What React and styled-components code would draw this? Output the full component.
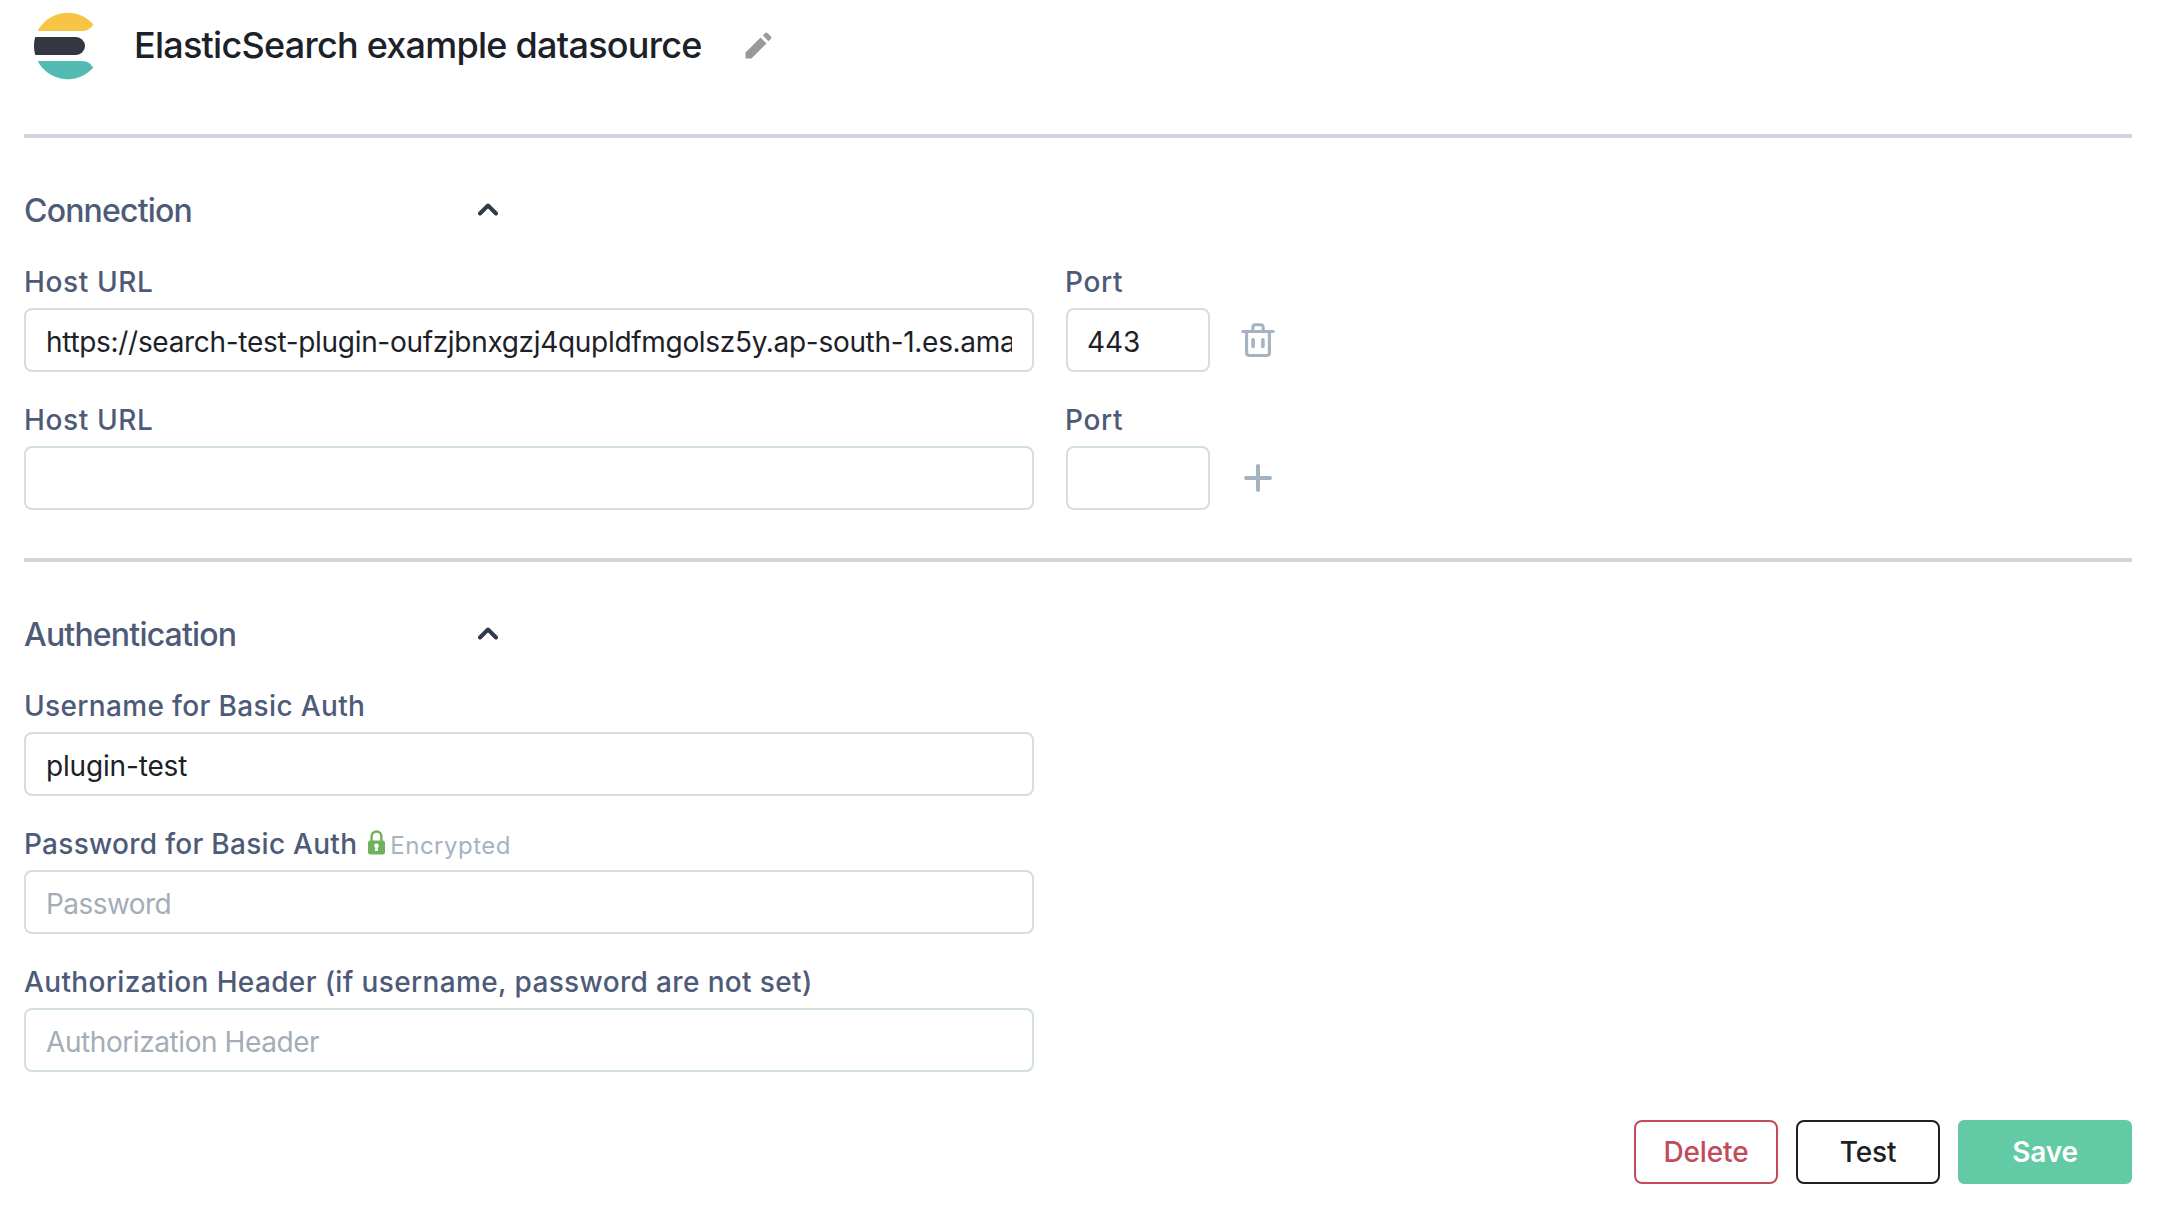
import React from "react";
import styled, { createGlobalStyle } from "styled-components";

const GlobalStyle = createGlobalStyle`
  *, *::before, *::after { box-sizing: border-box; }
  body {
    margin: 0;
    background: #ffffff;
    font-family: Inter, "Liberation Sans", sans-serif;
    overflow: hidden;
  }
`;

const Page = styled.main`
  display: flex;
  flex-direction: column;
  width: 2164px;
  height: 1214px;
  padding: 12px 32px 30px 24px;
`;

const Header = styled.header`
  display: flex;
  align-items: center;
  height: 68px;
  margin-bottom: 54px;
  padding-left: 10px;
`;

const Title = styled.h1`
  margin: 0 43.5px 0 40px;
  padding-bottom: 2px;
  font-size: 36px;
  font-weight: 500;
  line-height: 44px;
  letter-spacing: -0.75px;
  white-space: nowrap;
  color: #1c2128;
`;

const IconButton = styled.button`
  display: flex;
  flex: none;
  padding: 0 0 ${(p) => p.$lift || 0}px;
  border: 0;
  background: none;
  color: ${(p) => p.$color};
  svg { display: block; }
`;

const Section = styled.section`
  display: flex;
  flex-direction: column;
  padding: 52px 0 48px;
  border-top: 4px solid #d0d5dc;
`;

const SectionHeader = styled.div`
  display: flex;
  align-items: center;
  justify-content: space-between;
  width: 474px;
  height: 40px;
  margin-bottom: 35px;
`;

const SectionTitle = styled.h2`
  margin: 0;
  padding-top: 2px;
  font-size: 32px;
  font-weight: 500;
  line-height: 40px;
  letter-spacing: -0.81px;
  color: #4e5b78;
`;

const Fields = styled.div`
  display: flex;
  flex-direction: column;
  gap: 31px;
`;

const FieldRow = styled.div`
  display: flex;
  align-items: flex-end;
  gap: 32px;
`;

const Field = styled.label`
  display: flex;
  flex-direction: column;
  gap: 9px;
  width: ${(p) => p.$width}px;
`;

const LabelLine = styled.span`
  display: flex;
  align-items: center;
  height: 34px;
`;

const LabelText = styled.span`
  font-size: 28px;
  font-weight: 500;
  line-height: 34px;
  letter-spacing: ${(p) => p.$spacing}px;
  text-indent: ${(p) => p.$indent || 0}px;
  white-space: nowrap;
  color: #4e5b78;
`;

const Encrypted = styled.span`
  display: flex;
  align-items: center;
  gap: 5px;
  margin-left: 11px;
  svg { margin-bottom: 4px; }
`;

const EncryptedText = styled.span`
  padding-top: 3px;
  font-size: 24px;
  line-height: 31px;
  letter-spacing: 0.5px;
  color: #a6b3c2;
`;

const Input = styled.input`
  width: 100%;
  height: 64px;
  padding: 4px 20px 0;
  border: 2px solid #d3dee3;
  border-radius: 8px;
  outline: none;
  background: #ffffff;
  font-family: inherit;
  font-size: 28px;
  letter-spacing: ${(p) => p.$spacing || 0}px;
  text-indent: ${(p) => p.$indent || 0}px;
  color: #1c2128;
  &::placeholder { color: #a3adb7; opacity: 1; }
`;

const RowAction = styled.div`
  display: flex;
  align-items: center;
  justify-content: center;
  width: 36px;
  height: 64px;
  margin-left: -2px;
`;

const Actions = styled.footer`
  display: flex;
  justify-content: flex-end;
  gap: 18px;
`;

const Button = styled.button`
  display: flex;
  align-items: center;
  justify-content: center;
  width: ${(p) => p.$width}px;
  height: 64px;
  padding: 0;
  border: 2px solid ${(p) => p.$border};
  border-radius: ${(p) => p.$radius || 8}px;
  background: ${(p) => p.$fill || "#ffffff"};
  font-family: inherit;
  font-size: 28px;
  font-weight: ${(p) => p.$weight || 500};
  letter-spacing: -0.15px;
  color: ${(p) => p.$color};
`;

const ElasticLogo = () => (
  <svg width="60" height="68" viewBox="0 0 60 68" aria-hidden="true">
    <path d="M3.6 19A34 34 0 0 1 59.4 12.4C56.8 15.6 54.5 19 48 19Z" fill="#f6c544" />
    <path d="M1.2 25H42a9 9 0 0 1 0 18H1.2A34 34 0 0 1 1.2 25Z" fill="#343741" />
    <path d="M3.6 49H48C54.5 49 56.8 52.4 59.4 55.6A34 34 0 0 1 3.6 49Z" fill="#54bbb3" />
  </svg>
);

const PencilIcon = () => (
  <svg width="27" height="27" viewBox="0 0 27 27" fill="currentColor">
    <path d="M.5 20.5 15.5 5.5 21.5 11.5 6.5 26.5H.5Z" />
    <path d="M18 3.6 20.2 1.1Q21.2 0 22.4 1.1L26 4.4Q27 5.6 26 6.8L23.4 9.3Z" />
  </svg>
);

const ChevronUp = () => (
  <svg width="20" height="13" viewBox="0 0 20 13" fill="none" stroke="currentColor" strokeWidth="4" strokeLinecap="round" strokeLinejoin="round">
    <path d="m2 10.5 8-8 8 8" />
  </svg>
);

const TrashIcon = () => (
  <svg width="36" height="36" viewBox="0 0 36 36" fill="none" stroke="currentColor" strokeWidth="3.1" strokeLinecap="round" strokeLinejoin="round">
    <path d="M2.8 9.5H33.2" />
    <path d="M12.8 9V5.5q0-2.8 2.8-2.8h4.8q2.8 0 2.8 2.8V9" />
    <path d="M6.6 10V30.4q0 3.1 3.1 3.1H26.3q3.1 0 3.1-3.1V10" />
    <path d="M13.1 17.8v6.6M22.9 17.8v6.6" strokeWidth="3.6" />
  </svg>
);

const PlusIcon = () => (
  <svg width="28" height="28" viewBox="0 0 28 28" fill="none" stroke="currentColor" strokeWidth="4" strokeLinecap="round">
    <path d="M14 2v24M2 14h24" />
  </svg>
);

const LockIcon = () => (
  <svg width="17" height="25" viewBox="0 0 17 25">
    <path d="M3.6 12V6.4a4.9 4.9 0 0 1 9.8 0V12" fill="none" stroke="#70b25a" strokeWidth="2.4" />
    <rect y="10.5" width="17" height="14" rx="2.2" fill="#70b25a" />
    <circle cx="8.5" cy="15.8" r="2.3" fill="#fff" />
    <path d="M7.6 16h1.8l.7 5H6.9Z" fill="#fff" />
  </svg>
);

const TextField = ({ label, spacing, indent, width, note, ...input }) => (
  <Field $width={width}>
    <LabelLine>
      <LabelText $spacing={spacing} $indent={indent}>{label}</LabelText>
      {note}
    </LabelLine>
    <Input $indent={indent} {...input} />
  </Field>
);

const CollapsibleSection = ({ title, children }) => (
  <Section>
    <SectionHeader>
      <SectionTitle>{title}</SectionTitle>
      <IconButton $color="#2f3b47" $lift={1} aria-label="Collapse"><ChevronUp /></IconButton>
    </SectionHeader>
    <Fields>{children}</Fields>
  </Section>
);

const HostRow = ({ host, port, icon }) => (
  <FieldRow>
    <TextField label="Host URL" spacing={0.62} width={1010} defaultValue={host} $spacing={-0.31} />
    <TextField label="Port" spacing={0.7} indent={-1} width={144} defaultValue={port} $spacing={-0.1} />
    <RowAction>
      <IconButton $color="#a5b2bf">{icon}</IconButton>
    </RowAction>
  </FieldRow>
);

export default function App() {
  return (
    <>
      <GlobalStyle />
      <Page>
        <Header>
          <ElasticLogo />
          <Title>ElasticSearch example datasource</Title>
          <IconButton $color="#999999" $lift={1} aria-label="Rename"><PencilIcon /></IconButton>
        </Header>

        <CollapsibleSection title="Connection">
          <HostRow
            host="https://search-test-plugin-oufzjbnxgzj4qupldfmgolsz5y.ap-south-1.es.amazonaws.com"
            port="443"
            icon={<TrashIcon />}
          />
          <HostRow host="" port="" icon={<PlusIcon />} />
        </CollapsibleSection>

        <CollapsibleSection title="Authentication">
          <TextField label="Username for Basic Auth" spacing={0.35} width={1010} defaultValue="plugin-test" $spacing={-0.17} />
          <TextField
            label="Password for Basic Auth"
            spacing={0.28}
            width={1010}
            placeholder="Password"
            $spacing={-0.56}
            note={<Encrypted><LockIcon /><EncryptedText>Encrypted</EncryptedText></Encrypted>}
          />
          <TextField
            label="Authorization Header (if username, password are not set)"
            spacing={0.36}
            width={1010}
            placeholder="Authorization Header"
            $spacing={-0.42}
          />
        </CollapsibleSection>

        <Actions>
          <Button $width={144} $border="#c14b5a" $color="#c14b5a">Delete</Button>
          <Button $width={144} $border="#1c2128" $color="#1c2128">Test</Button>
          <Button $width={174} $border="#62caa5" $fill="#62caa5" $color="#ffffff" $weight={600} $radius={6}>Save</Button>
        </Actions>
      </Page>
    </>
  );
}
